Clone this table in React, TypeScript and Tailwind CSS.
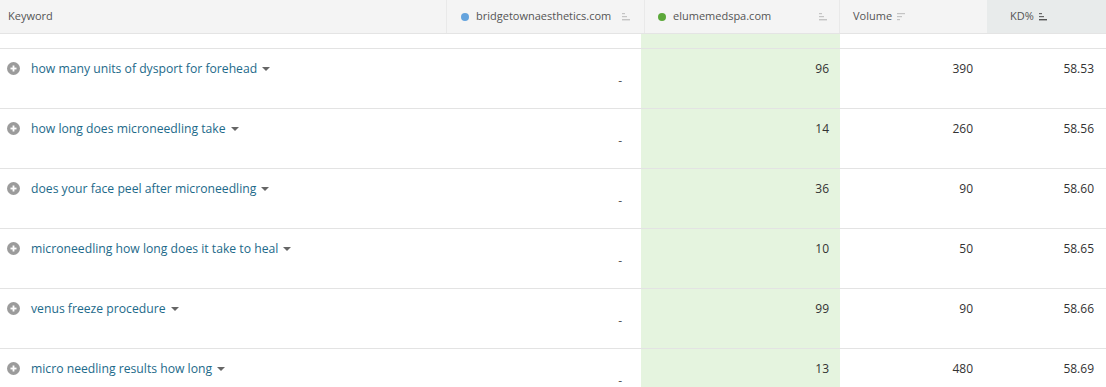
const rows = [
  { kw: "how many units of dysport for forehead", pos: 96, vol: 390, kd: "58.53" },
  { kw: "how long does microneedling take", pos: 14, vol: 260, kd: "58.56" },
  { kw: "does your face peel after microneedling", pos: 36, vol: 90, kd: "58.60" },
  { kw: "microneedling how long does it take to heal", pos: 10, vol: 50, kd: "58.65" },
  { kw: "venus freeze procedure", pos: 99, vol: 90, kd: "58.66" },
  { kw: "micro needling results how long", pos: 13, vol: 480, kd: "58.69" },
];

const cols = "grid grid-cols-[447px_198px_195px_147px_1fr]";

const SortIcon = ({ active }: { active?: boolean }) => (
  <svg width="9" height="8" viewBox="0 0 9 8" className="ml-[5px]">
    <rect x="0" y="0" width="3" height="1.2" fill={active ? "#666" : "#c4c4c4"} />
    <rect x="0" y="3" width="5" height="1.2" fill={active ? "#666" : "#c4c4c4"} />
    <rect x="0" y="6" width="8" height="1.4" fill={active ? "#555" : "#c4c4c4"} />
  </svg>
);

const VolIcon = () => (
  <svg width="9" height="8" viewBox="0 0 9 8" className="ml-[5px]">
    <rect x="0" y="0" width="8" height="1.2" fill="#c4c4c4" />
    <rect x="0" y="3" width="5" height="1.2" fill="#c4c4c4" />
    <rect x="0" y="6" width="3" height="1.2" fill="#c4c4c4" />
  </svg>
);

const PlusIcon = () => (
  <svg width="13" height="13" viewBox="0 0 13 13" className="shrink-0">
    <circle cx="6.5" cy="6.5" r="6.5" fill="#9b9b9b" />
    <rect x="3.5" y="5.6" width="6" height="1.8" fill="#fff" />
    <rect x="5.6" y="3.5" width="1.8" height="6" fill="#fff" />
  </svg>
);

const Caret = () => (
  <svg width="8" height="4" viewBox="0 0 8 4" className="ml-[5px] mt-[1px]">
    <path d="M0 0 L8 0 L4 4 Z" fill="#666" />
  </svg>
);

export default function App() {
  return (
    <div
      className="w-[1106px] h-[387px] overflow-hidden bg-white text-[#333]"
      style={{ fontFamily: "'Open Sans', 'Noto Sans', sans-serif" }}
    >
      <div className={`${cols} h-[34px] border-b border-[#e4e4e4] text-[11px] text-[#555]`}>
        <div className="flex items-center bg-[#f4f4f4] pl-[8px] border-r border-[#e9e9e9]">Keyword</div>
        <div className="flex items-center bg-[#f4f4f4] pl-[14px] border-r border-[#e9e9e9]">
          <span className="w-[8px] h-[8px] rounded-full bg-[#64a3dd] mr-[7px]" />
          bridgetownaesthetics.com
          <span className="ml-auto mr-[13px]"><SortIcon /></span>
        </div>
        <div className="flex items-center bg-[#f4f4f4] pl-[13px] border-r border-[#e9e9e9]">
          <span className="w-[8px] h-[8px] rounded-full bg-[#5ca83a] mr-[7px]" />
          elumemedspa.com
          <span className="ml-auto mr-[11px]"><SortIcon /></span>
        </div>
        <div className="flex items-center bg-[#f4f4f4] pl-[13px]">
          Volume
          <VolIcon />
        </div>
        <div className="flex items-center bg-[#e8ebeb] pl-[23px]">
          KD%
          <SortIcon active />
        </div>
      </div>
      <div className={`${cols} h-[14px]`}>
        <div />
        <div />
        <div className="bg-[#e5f4df] -ml-[4px]" />
        <div />
        <div />
      </div>
      {rows.map((r) => (
        <div key={r.kw} className={`${cols} h-[60px] border-t border-[#e3e3e3] text-[12px]`}>
          <div className="flex items-start pt-[11px] pl-[7px]">
            <div className="flex items-center h-[17px]">
              <PlusIcon />
              <span className="ml-[11px] text-[#1d6a8a] text-[12.2px] leading-[17px]">{r.kw}</span>
              <Caret />
            </div>
          </div>
          <div className="flex justify-end pt-[23px] pr-[23px] text-[#555] leading-[17px]">-</div>
          <div className="bg-[#e5f4df] -ml-[4px] flex justify-end pt-[11px] pr-[11px] leading-[17px]">{r.pos}</div>
          <div className="flex justify-end pt-[11px] pr-[14px] leading-[17px]">{r.vol}</div>
          <div className="flex justify-end pt-[11px] pr-[12px] leading-[17px]">{r.kd}</div>
        </div>
      ))}
    </div>
  );
}
